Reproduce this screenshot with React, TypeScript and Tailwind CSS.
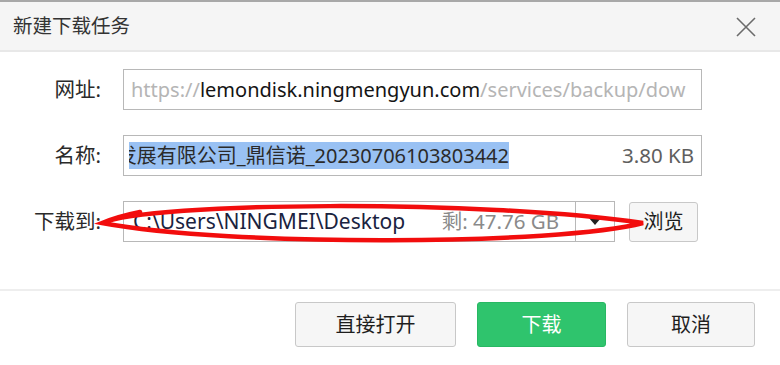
import React from "react";

const font = { fontFamily: '"Noto Sans", "Noto Sans CJK SC", sans-serif' };

export default function App() {
  return (
    <div
      className="relative w-[780px] h-[365px] bg-white overflow-hidden"
      style={font}
    >
      {/* title bar */}
      <div className="h-[52px] bg-[#f5f5f5] border-t-2 border-[#a8a8a8] border-b-2 border-b-[#e8e8e8] flex items-center justify-between pl-[13px] pr-[24px]">
        <span className="text-[19.5px] text-[#333]">新建下载任务</span>
        <svg width="20" height="20" viewBox="0 0 20 20" className="mt-[2px]">
          <path d="M1 1 L19 19 M19 1 L1 19" stroke="#6b6b6b" strokeWidth="1.6" />
        </svg>
      </div>

      {/* body */}
      <div className="pt-[17px] flex flex-col gap-[25px]">
        {/* url */}
        <div className="flex items-center">
          <div className="w-[103px] text-right text-[20.5px] text-[#2a2a2a] leading-none pr-[2px]">网址:</div>
          <div className="ml-[20px] w-[579px] h-[41px] border border-[#b8b8b8] flex items-center pl-[7px] overflow-hidden whitespace-nowrap text-[20px]">
            <span className="text-[#b5b5b5]">https://</span>
            <span className="text-[#141414]">lemondisk.ningmengyun.com</span>
            <span className="text-[#b5b5b5]">/services/backup/dow</span>
          </div>
        </div>

        {/* name */}
        <div className="flex items-center">
          <div className="w-[103px] text-right text-[20.5px] text-[#2a2a2a] leading-none pr-[2px]">名称:</div>
          <div className="ml-[20px] w-[579px] h-[41px] border border-[#b8b8b8] flex items-center pl-[5px] pr-[7px] overflow-hidden whitespace-nowrap text-[20px]">
            <div className="overflow-hidden w-[380px] flex justify-end">
              <span className="bg-[#99c1f3] text-[#2a2a2a] leading-[27px] whitespace-nowrap">
                发展有限公司_鼎信诺_20230706103803442
              </span>
            </div>
            <span className="ml-auto text-[#5e5e5e] text-[20.5px]">3.80 KB</span>
          </div>
        </div>

        {/* save to */}
        <div className="flex items-center">
          <div className="w-[103px] text-right text-[20.5px] text-[#2a2a2a] leading-none pr-[2px]">下载到:</div>
          <div className="ml-[20px] w-[492px] h-[41px] border border-[#b8b8b8] flex items-stretch whitespace-nowrap">
            <div className="flex-1 flex items-center pl-[9px] pr-[16px] overflow-hidden">
              <span className="text-[#1a2340] text-[21px]">C:\Users\NINGMEI\Desktop</span>
              <span className="ml-auto text-[#8a8a8a] text-[20.5px]">剩: 47.76 GB</span>
            </div>
            <div className="w-[39px] border-l border-[#b8b8b8] flex items-center justify-center">
              <svg width="12" height="7" viewBox="0 0 12 7">
                <path d="M0 0 L12 0 L6 7 Z" fill="#222" />
              </svg>
            </div>
          </div>
          <button className="ml-[14px] w-[69px] h-[40px] bg-[#f6f6f6] border border-[#c8c8c8] rounded-[3px] text-[20px] text-[#1e1e1e]">
            浏览
          </button>
        </div>
      </div>

      {/* footer */}
      <div className="absolute left-0 right-0 top-[289px] h-[2px] bg-[#eeeeee]" />
      <div className="absolute left-0 right-0 top-[302px] flex justify-end gap-[21px] pr-[25px]">
        <button className="w-[161px] h-[45px] bg-[#f6f6f6] border border-[#c8c8c8] rounded-[3px] text-[20px] text-[#1e1e1e]">
          直接打开
        </button>
        <button className="w-[129px] h-[45px] bg-[#2fc46d] border border-[#28b863] rounded-[3px] text-[20px] text-white">
          下载
        </button>
        <button className="w-[128px] h-[45px] bg-[#f6f6f6] border border-[#c8c8c8] rounded-[3px] text-[20px] text-[#1e1e1e]">
          取消
        </button>
      </div>

      {/* red annotation ellipse */}
      <svg
        className="absolute left-0 top-0 pointer-events-none"
        width="780"
        height="365"
        viewBox="0 0 780 365"
      >
        <path
          d="M102 223 C150 202, 480 199, 643 223 C560 245, 230 247, 102 223 C112 219, 125 215, 140 212"
          fill="none"
          stroke="#f20d0d"
          strokeWidth="4.5"
          strokeLinecap="round"
        />
      </svg>
    </div>
  );
}
